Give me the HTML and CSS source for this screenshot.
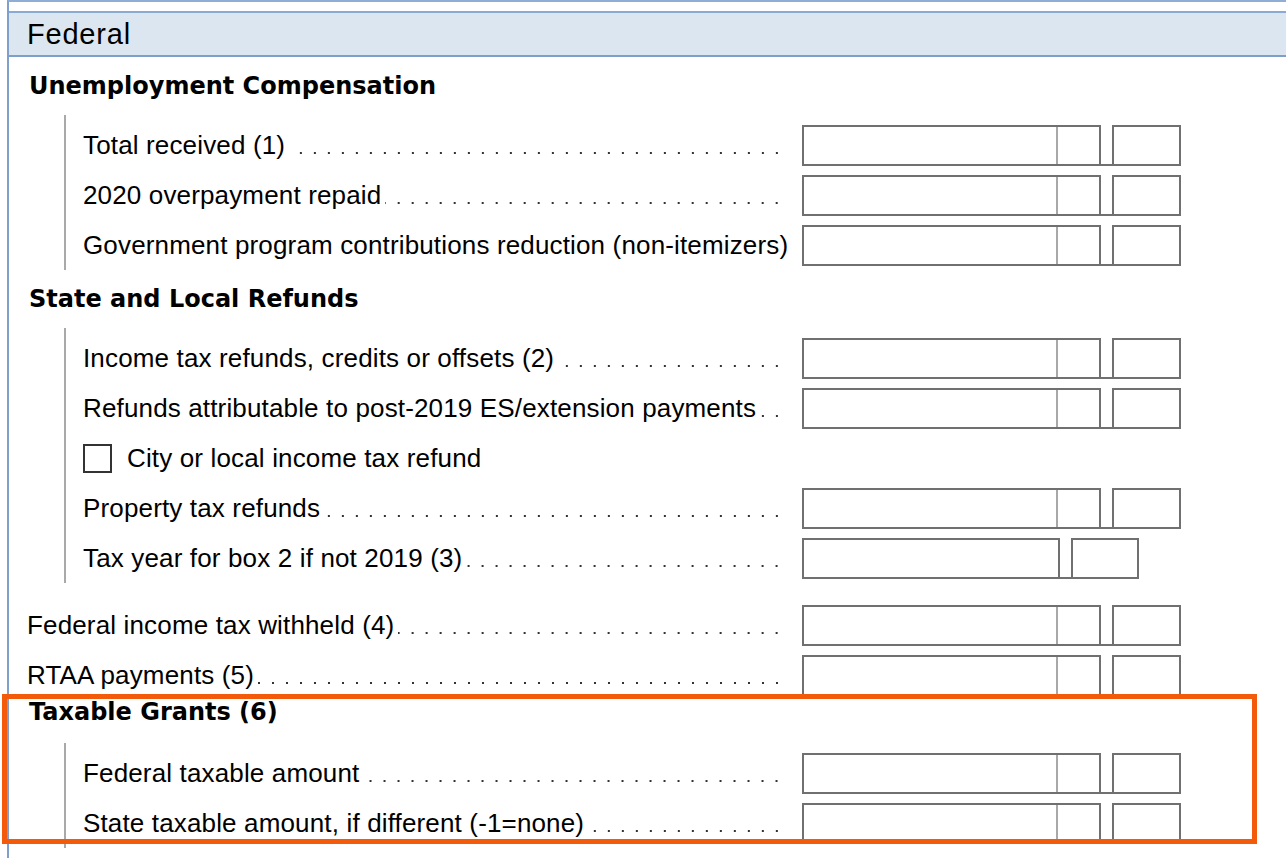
FILE: index.html
```html
<!DOCTYPE html>
<html lang="en">
<head>
    <meta charset="UTF-8">
    <meta name="viewport" content="width=device-width, initial-scale=1.0">
    <title>Federal - 1099-G</title>
    <link rel="stylesheet" href="styles.css">
</head>
<body>

<div class="panel">
    <div class="panel-title">Federal</div>

    <div class="section-title">Unemployment Compensation</div>
    <div class="group">
        <div class="row">
            <div class="label"><span>Total received (1)</span><span class="leader"></span></div>
            <div class="fields">
                <div class="box amount"><span class="cents"></span></div>
                <div class="box-gap"></div>
                <div class="box code"></div>
            </div>
        </div>
        <div class="row">
            <div class="label"><span>2020 overpayment repaid</span><span class="leader"></span></div>
            <div class="fields">
                <div class="box amount"><span class="cents"></span></div>
                <div class="box-gap"></div>
                <div class="box code"></div>
            </div>
        </div>
        <div class="row">
            <div class="label"><span>Government program contributions reduction (non-itemizers)</span></div>
            <div class="fields">
                <div class="box amount"><span class="cents"></span></div>
                <div class="box-gap"></div>
                <div class="box code"></div>
            </div>
        </div>
    </div>

    <div class="section-title">State and Local Refunds</div>
    <div class="group">
        <div class="row">
            <div class="label"><span>Income tax refunds, credits or offsets (2)</span><span class="leader"></span></div>
            <div class="fields">
                <div class="box amount"><span class="cents"></span></div>
                <div class="box-gap"></div>
                <div class="box code"></div>
            </div>
        </div>
        <div class="row">
            <div class="label"><span>Refunds attributable to post-2019 ES/extension payments</span><span class="leader"></span></div>
            <div class="fields">
                <div class="box amount"><span class="cents"></span></div>
                <div class="box-gap"></div>
                <div class="box code"></div>
            </div>
        </div>
        <div class="row">
            <label class="check"><span class="checkbox"></span>City or local income tax refund</label>
        </div>
        <div class="row">
            <div class="label"><span>Property tax refunds</span><span class="leader"></span></div>
            <div class="fields">
                <div class="box amount"><span class="cents"></span></div>
                <div class="box-gap"></div>
                <div class="box code"></div>
            </div>
        </div>
        <div class="row">
            <div class="label"><span>Tax year for box 2 if not 2019 (3)</span><span class="leader"></span></div>
            <div class="fields">
                <div class="box year"></div>
                <div class="box-gap"></div>
                <div class="box year-code"></div>
            </div>
        </div>
    </div>

    <div class="top-rows">
        <div class="row">
            <div class="label"><span>Federal income tax withheld (4)</span><span class="leader"></span></div>
            <div class="fields">
                <div class="box amount"><span class="cents"></span></div>
                <div class="box-gap"></div>
                <div class="box code"></div>
            </div>
        </div>
        <div class="row">
            <div class="label"><span>RTAA payments (5)</span><span class="leader"></span></div>
            <div class="fields">
                <div class="box amount"><span class="cents"></span></div>
                <div class="box-gap"></div>
                <div class="box code"></div>
            </div>
        </div>
    </div>

    <div class="section-title tight">Taxable Grants (6)</div>
    <div class="group">
        <div class="row">
            <div class="label"><span>Federal taxable amount</span><span class="leader"></span></div>
            <div class="fields">
                <div class="box amount"><span class="cents"></span></div>
                <div class="box-gap"></div>
                <div class="box code"></div>
            </div>
        </div>
        <div class="row">
            <div class="label"><span>State taxable amount, if different (-1=none)</span><span class="leader"></span></div>
            <div class="fields">
                <div class="box amount"><span class="cents"></span></div>
                <div class="box-gap"></div>
                <div class="box code"></div>
            </div>
        </div>
    </div>
</div>

<div class="highlight"></div>

</body>
</html>
```

FILE: styles.css
```css
html, body {
    margin: 0;
    height: 100%;
    overflow: hidden;
}
body {
    font-family: "Liberation Sans", Arial, sans-serif;
    font-size: 26px;
    color: #000;
    background-color: #fff;
}
.panel {
    margin-left: 7px;
    min-height: 100vh;
    box-sizing: border-box;
    padding-top: 9px;
    border-left: 2px solid #7fa0cc;
    border-top: 2px solid #8eaed6;
}
.panel-title {
    height: 42px;
    line-height: 42px;
    padding-left: 18px;
    font-size: 29px;
    letter-spacing: 0.8px;
    background-color: #dce6f1;
    border-top: 2px solid #8aaad3;
    border-bottom: 2px solid #7f9fcb;
}
.section-title {
    font-family: "DejaVu Sans", Verdana, sans-serif;
    font-weight: bold;
    font-size: 24px;
    line-height: 28px;
    padding: 15px 0 15px 20px;
}
.section-title.tight {
    margin-top: -2px;
    padding-top: 0;
    padding-bottom: 17px;
}
.group {
    margin-left: 55px;
    padding-top: 5px;
    border-left: 2px solid #a9a9a9;
}
.group .row {
    padding-left: 17px;
}
.top-rows {
    margin-top: 17px;
}
.top-rows .row {
    padding-left: 18px;
}
.row {
    display: flex;
    align-items: center;
    height: 50px;
    padding-right: 105px;
    white-space: nowrap;
}
.label {
    flex: 1;
    min-width: 0;
    display: flex;
    align-items: baseline;
    margin-right: 24px;
    letter-spacing: 0.15px;
    line-height: 30px;
}
.leader {
    flex: 1;
    height: 2px;
    margin-left: 4px;
    background-image: linear-gradient(to left, #333 2px, transparent 2px);
    background-size: 14px 2px;
    background-repeat: repeat-x;
    background-position: right bottom;
}
.check {
    display: flex;
    align-items: center;
    letter-spacing: 0.15px;
}
.checkbox {
    width: 29px;
    height: 29px;
    box-sizing: border-box;
    border: 2px solid #333;
    margin-right: 15px;
}
.fields {
    display: flex;
    flex-shrink: 0;
    width: 379px;
    height: 41px;
}
.box {
    box-sizing: border-box;
    height: 41px;
    border: 2px solid #707070;
    background-color: #fff;
}
.box-gap {
    width: 11px;
    box-sizing: border-box;
    border-bottom: 2px solid #707070;
}
.amount {
    width: 299px;
    display: flex;
    justify-content: flex-end;
}
.cents {
    width: 41px;
    border-left: 2px solid #a8a8a8;
}
.code {
    width: 69px;
}
.year {
    width: 258px;
}
.year-code {
    width: 68px;
}
.highlight {
    position: absolute;
    left: 2px;
    top: 694px;
    width: 1245px;
    height: 140px;
    border: 5px solid #f35b0a;
}
```
